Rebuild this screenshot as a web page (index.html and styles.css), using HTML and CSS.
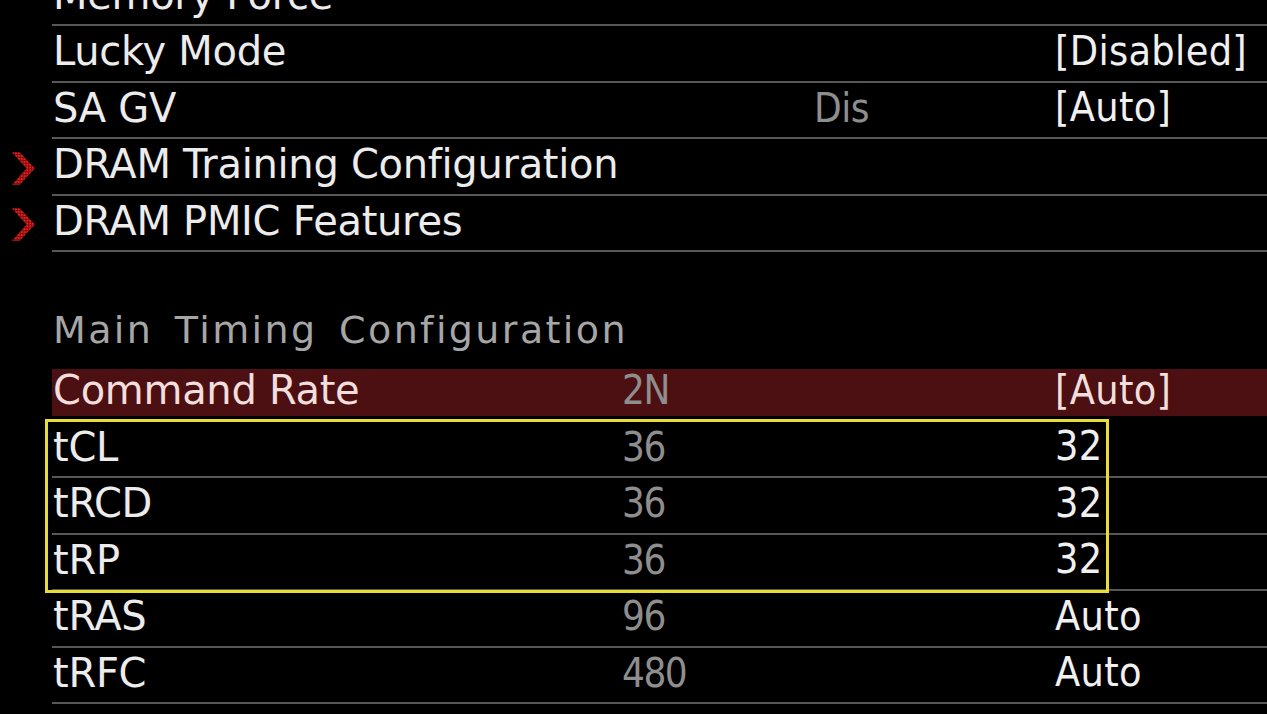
FILE: index.html
```html
<!DOCTYPE html>
<html lang="en">
<head>
<meta charset="utf-8">
<title>Memory timing</title>
<link rel="stylesheet" href="styles.css">
</head>
<body>
<svg class="defs" width="0" height="0" aria-hidden="true">
  <defs>
    <pattern id="led" width="3" height="3" patternUnits="userSpaceOnUse">
      <rect width="3" height="3" fill="#7a0c0c"/>
      <rect width="2" height="2" fill="#e3221f"/>
    </pattern>
  </defs>
</svg>
<main class="list">
  <div class="row">
    <div class="gutter"></div>
    <div class="body"><span class="label">Memory Force</span><span class="cur"></span><span class="val"></span></div>
  </div>
  <div class="row">
    <div class="gutter"></div>
    <div class="body"><span class="label">Lucky Mode</span><span class="cur"></span><span class="val">[Disabled]</span></div>
  </div>
  <div class="row">
    <div class="gutter"></div>
    <div class="body"><span class="label">SA GV</span><span class="cur cur-shift">Dis</span><span class="val">[Auto]</span></div>
  </div>
  <div class="row">
    <div class="gutter"><svg class="chev" viewBox="0 0 24 34"><polygon points="0,0 8,0 24,17 8,34 0,34 15,17" fill="url(#led)"/></svg></div>
    <div class="body"><span class="label">DRAM Training Configuration</span><span class="cur"></span><span class="val"></span></div>
  </div>
  <div class="row">
    <div class="gutter"><svg class="chev" viewBox="0 0 24 34"><polygon points="0,0 8,0 24,17 8,34 0,34 15,17" fill="url(#led)"/></svg></div>
    <div class="body"><span class="label">DRAM PMIC Features</span><span class="cur"></span><span class="val"></span></div>
  </div>
  <div class="spacer"></div>
  <div class="section">
    <div class="gutter"></div>
    <h2 class="section-title">Main Timing Configuration</h2>
  </div>
  <div class="row selected">
    <div class="gutter"></div>
    <div class="body"><span class="label">Command Rate</span><span class="cur">2N</span><span class="val">[Auto]</span></div>
  </div>
  <div class="group">
    <div class="row">
      <div class="gutter"></div>
      <div class="body"><span class="label">tCL</span><span class="cur">36</span><span class="val">32</span></div>
    </div>
    <div class="row">
      <div class="gutter"></div>
      <div class="body"><span class="label">tRCD</span><span class="cur">36</span><span class="val">32</span></div>
    </div>
    <div class="row">
      <div class="gutter"></div>
      <div class="body"><span class="label">tRP</span><span class="cur">36</span><span class="val">32</span></div>
    </div>
  </div>
  <div class="row">
    <div class="gutter"></div>
    <div class="body"><span class="label">tRAS</span><span class="cur">96</span><span class="val">Auto</span></div>
  </div>
  <div class="row">
    <div class="gutter"></div>
    <div class="body"><span class="label">tRFC</span><span class="cur">480</span><span class="val">Auto</span></div>
  </div>
</main>
</body>
</html>
```
FILE: styles.css
```css
html, body {
  margin: 0;
  padding: 0;
  background: #000;
  overflow: hidden;
}

body {
  width: 1267px;
  height: 714px;
  font-family: "DejaVu Sans", sans-serif;
  color: #ececec;
}

.defs {
  position: absolute;
  width: 0;
  height: 0;
}

.list {
  margin-top: -30.5px;
}

.row,
.section {
  display: flex;
}

.gutter {
  width: 52px;
  flex: none;
  display: flex;
  align-items: center;
  justify-content: flex-start;
}

.chev {
  width: 23px;
  height: 33px;
  margin-left: 12px;
  margin-top: 2px;
}

.body {
  flex: 1;
  height: 54.5px;
  border-bottom: 2px solid #585858;
  display: grid;
  grid-template-columns: 570px 433px 1fr;
  align-items: center;
  font-size: 40px;
  line-height: 1;
  box-sizing: content-box;
}

.label,
.cur,
.val {
  white-space: nowrap;
  padding-left: 1px;
  margin-top: -4px;
}

.label {
  letter-spacing: -0.3px;
}

.cur,
.val {
  font-family: "DejaVu Sans Condensed", "DejaVu Sans", sans-serif;
  font-stretch: condensed;
}

.cur {
  color: #8e8e8e;
  letter-spacing: -1.5px;
  padding-left: 0;
}

.cur-shift {
  padding-left: 192px;
  letter-spacing: -0.5px;
}

.val {
  color: #f0f0f0;
  font-size: 41px;
  letter-spacing: 0.3px;
  padding-left: 0;
}

.spacer {
  height: 56.5px;
}

.section {
  height: 56.5px;
  align-items: center;
}

.section-title {
  margin: 0;
  padding-left: 1px;
  font-weight: normal;
  font-size: 38px;
  line-height: 1;
  letter-spacing: 2.4px;
  word-spacing: 7px;
  color: #a6a6a6;
  margin-top: -14px;
}

.selected .body {
  background: #4c1012;
  background-clip: content-box;
  padding: 4px 0;
  height: 46.5px;
  border-bottom-color: transparent;
}

.selected .label,
.selected .val {
  color: #f3dede;
}

.group {
  position: relative;
}

.group::after {
  content: "";
  position: absolute;
  left: 45px;
  top: -2.5px;
  width: 1058px;
  height: 168px;
  border: 3px solid #e8dd34;
  pointer-events: none;
}
```
